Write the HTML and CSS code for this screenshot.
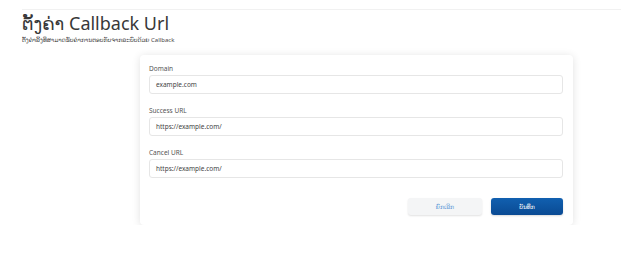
FILE: index.html
```html
<!DOCTYPE html>
<html lang="lo">
<head>
<meta charset="utf-8">
<link rel="stylesheet" href="styles.css">
</head>
<body>
<div class="page">
  <header class="head">
    <h1 class="title">ຕັ້ງຄ່າ Callback Url</h1>
    <p class="subtitle">ຕັ້ງຄ່າລິ້ງທີ່ສາມາດຮັບຄ່າການຕອບກັບຈາກລະບົບດ້ວຍ Callback</p>
  </header>
  <div class="wrap">
    <form class="card">
      <div class="field">
        <label class="label">Domain</label>
        <div class="input">example.com</div>
      </div>
      <div class="field">
        <label class="label">Success URL</label>
        <div class="input">https://example.com/</div>
      </div>
      <div class="field">
        <label class="label">Cancel URL</label>
        <div class="input">https://example.com/</div>
      </div>
      <div class="actions">
        <button type="button" class="btn btn-cancel">ຍົກເລີກ</button>
        <button type="button" class="btn btn-save">ບັນທຶກ</button>
      </div>
    </form>
  </div>
</div>
</body>
</html>
```

FILE: styles.css
```css
html, body {
  margin: 0;
  padding: 0;
  background: #ffffff;
}
body {
  font-family: "Noto Sans", "Open Sans", "DejaVu Sans", sans-serif;
  color: #444;
}
.page {
  padding-top: 9px;
}
.head {
  margin-left: 22px;
  border-top: 1px solid #f1f1f1;
  padding-top: 2px;
}
.title {
  margin: 0;
  font-size: 18px;
  line-height: 22px;
  font-weight: 400;
  color: #383838;
}
.subtitle {
  margin: 2px 0 0 0;
  font-size: 6px;
  line-height: 9px;
  color: #444;
}
.wrap {
  display: flex;
  padding-left: 140px;
  margin-top: 10px;
}
.card {
  width: 433px;
  box-sizing: border-box;
  padding: 9px 10px 10px 9px;
  background: #fff;
  border-radius: 4px;
  box-shadow: 0 1px 8px rgba(0, 0, 0, 0.12);
  display: flex;
  flex-direction: column;
  gap: 12px;
}
.field {
  display: flex;
  flex-direction: column;
  gap: 1px;
}
.label {
  font-size: 6.5px;
  line-height: 10px;
  color: #555;
}
.input {
  height: 19px;
  box-sizing: border-box;
  border: 1px solid #e6e6e6;
  border-radius: 3px;
  padding-left: 6px;
  font-size: 6.5px;
  line-height: 17px;
  color: #444;
}
.actions {
  display: flex;
  justify-content: flex-end;
  gap: 9px;
  margin-top: 8px;
}
.btn {
  height: 17px;
  border: none;
  border-radius: 3px;
  font-family: "Noto Sans", "DejaVu Sans", sans-serif;
  font-size: 6px;
  padding: 0;
  cursor: pointer;
}
.btn-cancel {
  width: 74px;
  background: #f4f5f6;
  color: #5d9ad8;
  box-shadow: 0 1px 2px rgba(0, 0, 0, 0.12);
}
.btn-save {
  width: 72px;
  background: linear-gradient(#1160b0, #0a4a93);
  color: #fff;
  box-shadow: 0 1px 2px rgba(0, 0, 0, 0.15);
}
```
